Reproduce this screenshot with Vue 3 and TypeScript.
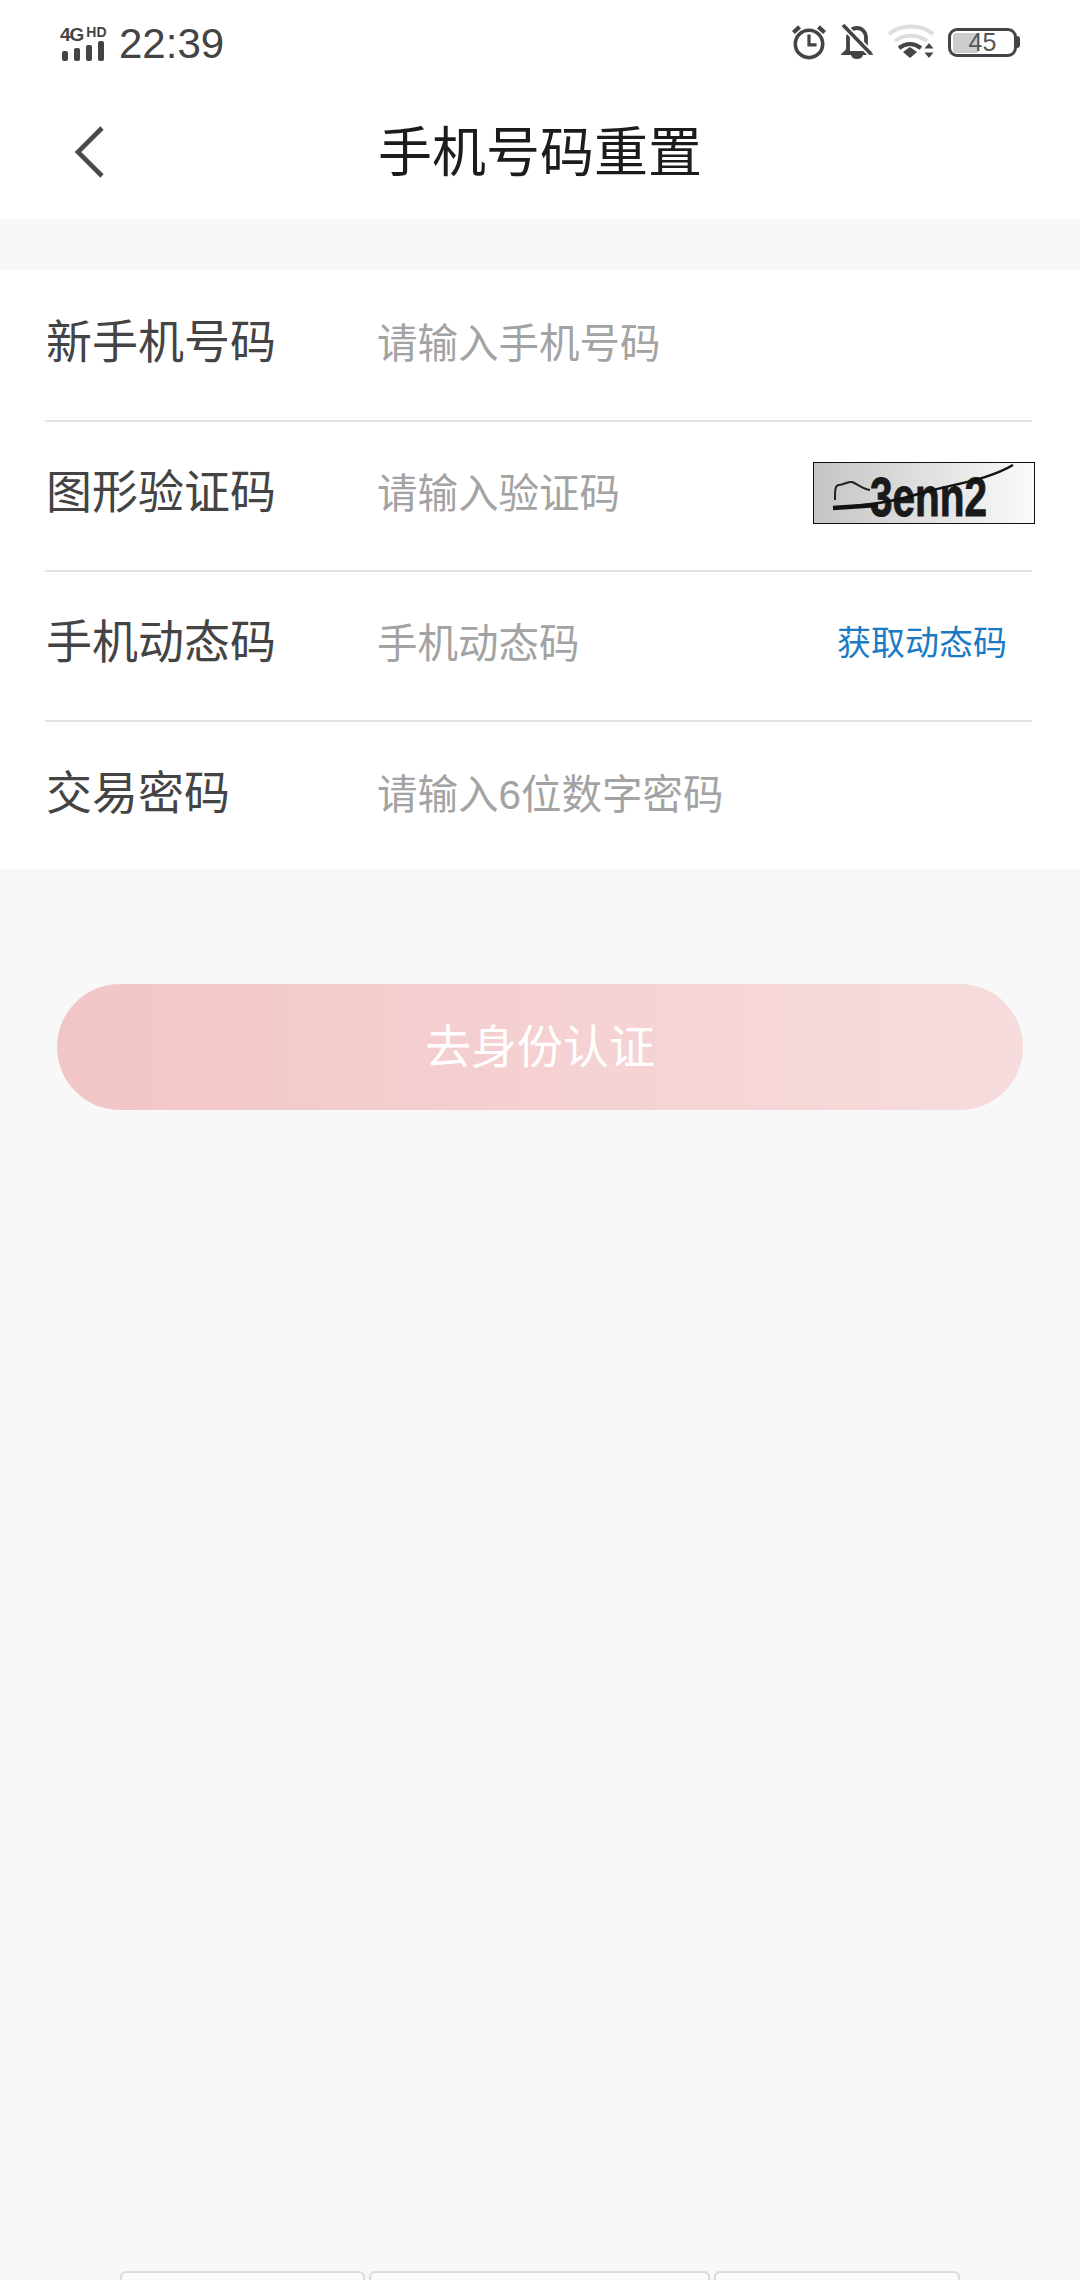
<template>
  <div class="page">
    <div class="status-bar">
      <div class="status-left">
        <div class="signal">
          <div class="net"><span class="net-4g">4G</span><span class="net-hd">HD</span></div>
          <div class="bars"><i class="b1"></i><i class="b2"></i><i class="b3"></i><i class="b4"></i></div>
        </div>
        <span class="time">22:39</span>
      </div>
      <div class="status-right">
        <svg class="ic-alarm" width="34" height="36" viewBox="0 0 36 38" fill="none" stroke="#444" stroke-width="3.8">
          <circle cx="18" cy="21" r="14.5" />
          <path d="M18 11v11h8" stroke-width="3.4" />
          <path d="M1.500 9l6.500-6 M34.500 9l-6.500-6" stroke-width="4.500" />
        </svg>
        <svg class="ic-bell" width="32" height="36" viewBox="0 0 32 36" fill="none">
          <path d="M7 26V14c0-6 4-10 9-10s9 4 9 10v12l3 3H4z" stroke="#444" stroke-width="3.8" />
          <path d="M10 31h12c-1 3-3 4-6 4s-5-1-6-4z" fill="#444" />
          <path d="M3 2l27 28" stroke="#fff" stroke-width="7" />
          <path d="M2 1l28 29" stroke="#444" stroke-width="3.6" />
        </svg>
        <svg class="ic-wifi" width="48" height="36" viewBox="0 0 48 36" fill="none">
          <path d="M1 10c12-10 32-10 44 0" stroke="#ddd" stroke-width="3.800" />
          <path d="M7 17c9-7 23-7 32 0" stroke="#ddd" stroke-width="3.800" />
          <path d="M11 24c7-5 15-5 22 0" stroke="#444" stroke-width="4" />
          <path d="M15 28l7-5 7 5-7 6z" fill="#444" />
          <path d="M41 19l4.500 5.500h-9z M41 34l4.500-5.500h-9z" fill="#444" />
        </svg>
        <div class="battery">
          <div class="battery-body">
            <div class="battery-fill"></div>
            <span class="battery-num">45</span>
          </div>
          <div class="battery-cap"></div>
        </div>
      </div>
    </div>

    <header class="nav">
      <svg class="back" width="36" height="56" viewBox="0 0 36 56" fill="none" stroke="#4a4a4a" stroke-width="4.6">
        <path d="M30 3L6 27l24 24" />
      </svg>
      <h1 class="title">手机号码重置</h1>
    </header>

    <section class="form">
      <div class="row">
        <span class="label">新手机号码</span>
        <span class="hint">请输入手机号码</span>
      </div>
      <div class="row">
        <span class="label">图形验证码</span>
        <span class="hint">请输入验证码</span>
        <svg class="captcha" width="222" height="62" viewBox="0 0 222 62">
          <defs>
            <linearGradient id="cg" x1="0" x2="1" y1="0" y2="0">
              <stop offset="0" stop-color="#c4c4c4" />
              <stop offset="1" stop-color="#fbfbfb" />
            </linearGradient>
          </defs>
          <rect x="0.5" y="0.5" width="221" height="61" fill="url(#cg)" stroke="#111" />
          <text class="captcha-text" x="57" y="54" textLength="117" lengthAdjust="spacingAndGlyphs">3enn2</text>
          <path d="M22 38c0-10 0-15 4-15 5 0 9-4 13-3 6 2 10 7 18 8" fill="none" stroke="#222" stroke-width="2" />
          <path d="M20 46c30-2 60-6 85-14 35-10 70-14 95-29" fill="none" stroke="#111" stroke-width="2.4" />
          <path d="M20 46l45-3" fill="none" stroke="#111" stroke-width="4.500" />
        </svg>
      </div>
      <div class="row">
        <span class="label">手机动态码</span>
        <span class="hint">手机动态码</span>
        <span class="get-code">获取动态码</span>
      </div>
      <div class="row">
        <span class="label">交易密码</span>
        <span class="hint">请输入6位数字密码</span>
      </div>
    </section>

    <button type="button" class="submit">去身份认证</button>

    <div class="keys">
      <i class="key k1"></i><i class="key k2"></i><i class="key k3"></i>
    </div>
  </div>
</template>

<script setup lang="ts">
</script>

<style>
html,
body {
  margin: 0;
  background: #f8f8f8;
}
</style>

<style scoped>
.page {
  position: relative;
  height: 2280px;
  overflow: hidden;
  background: #f8f8f8;
  font-family: "Liberation Sans", "Noto Sans CJK SC", sans-serif;
}

.status-bar {
  height: 80px;
  background: #fff;
  display: flex;
  justify-content: space-between;
  align-items: flex-start;
  padding: 20px 60px 0 60px;
  box-sizing: border-box;
}

.status-left {
  display: flex;
  align-items: center;
  gap: 12px;
}

.signal {
  width: 47px;
  display: flex;
  flex-direction: column;
  gap: 0;
}

.net {
  height: 16px;
  display: flex;
  align-items: flex-start;
  font-weight: 700;
  color: #444;
  line-height: 1;
}

.net-4g {
  font-size: 19px;
  letter-spacing: -1px;
}

.net-hd {
  font-size: 14px;
  margin-left: 3px;
}

.bars {
  display: flex;
  align-items: flex-end;
  gap: 6px;
  padding-left: 2px;
  height: 20px;
}

.bars i {
  width: 6px;
  background: #444;
  border-radius: 2px;
}

.b1 { height: 10px; }
.b2 { height: 13px; }
.b3 { height: 16px; }
.b4 { height: 20px; }

.time {
  font-size: 42px;
  line-height: 44px;
  color: #444;
  margin-top: 2px;
}

.status-right {
  display: flex;
  align-items: center;
  gap: 15px;
  padding-top: 4px;
}

.battery {
  display: flex;
  align-items: center;
  margin-left: -3px;
}

.battery-body {
  position: relative;
  width: 69px;
  height: 29px;
  box-sizing: border-box;
  border: 3px solid #444;
  border-radius: 9px;
  overflow: hidden;
  display: flex;
  align-items: center;
  justify-content: center;
}

.battery-fill {
  position: absolute;
  left: 2px;
  top: 2px;
  bottom: 1px;
  width: 26px;
  background: #ccc;
  border-radius: 3px;
}

.battery-num {
  position: relative;
  font-size: 25px;
  line-height: 1;
  color: #555;
}

.battery-cap {
  width: 3px;
  height: 12px;
  background: #444;
  border-radius: 0 3px 3px 0;
}

.nav {
  position: relative;
  height: 139px;
  background: #fff;
  display: flex;
  align-items: center;
  justify-content: center;
  padding-top: 6px;
  box-sizing: border-box;
}

.back {
  position: absolute;
  left: 72px;
  top: 45px;
}

.title {
  margin: 0;
  font-size: 54px;
  font-weight: 400;
  line-height: 1;
  color: #1c1c1c;
}

.form {
  margin-top: 51px;
  background: #fff;
  padding: 2px 48px 0 45px;
}

.row {
  height: 150px;
  display: flex;
  align-items: center;
  box-sizing: border-box;
  border-bottom: 2px solid #e3e3e3;
  padding-bottom: 8px;
  position: relative;
}

.row:last-child {
  height: 147px;
  border-bottom: none;
  padding-bottom: 5px;
}

.label {
  width: 331px;
  font-size: 46px;
  color: #444;
  line-height: 1;
  padding-left: 1px;
  flex-shrink: 0;
}

.hint {
  font-size: 40.5px;
  line-height: 1;
  color: #a3a3a3;
  margin-top: 4px;
}

.captcha {
  position: absolute;
  left: 768px;
  top: 40px;
  overflow: visible;
}

.captcha-text {
  font-family: "Liberation Sans", sans-serif;
  font-size: 56px;
  font-weight: 700;
  fill: #1a1a1a;
  stroke: #1a1a1a;
  stroke-width: 1;
}

.get-code {
  position: absolute;
  left: 792px;
  top: 54px;
  font-size: 34px;
  line-height: 1;
  color: #1a7ac4;
}

.submit {
  display: block;
  width: 966px;
  height: 126px;
  margin: 115px 0 0 57px;
  padding: 0;
  border: none;
  border-radius: 63px;
  background: linear-gradient(90deg, #f2c5c7, #f7dcdd);
  color: #fff;
  font-family: inherit;
  font-size: 46px;
  line-height: 1;
}

.keys {
  position: absolute;
  left: 120px;
  top: 2271px;
  display: flex;
  gap: 4px;
}

.key {
  height: 20px;
  box-sizing: border-box;
  border: 2px solid #dcdcdc;
  border-radius: 6px 6px 0 0;
  background: #fbfbfb;
}

.k1 { width: 245px; }
.k2 { width: 341px; }
.k3 { width: 246px; }
</style>
